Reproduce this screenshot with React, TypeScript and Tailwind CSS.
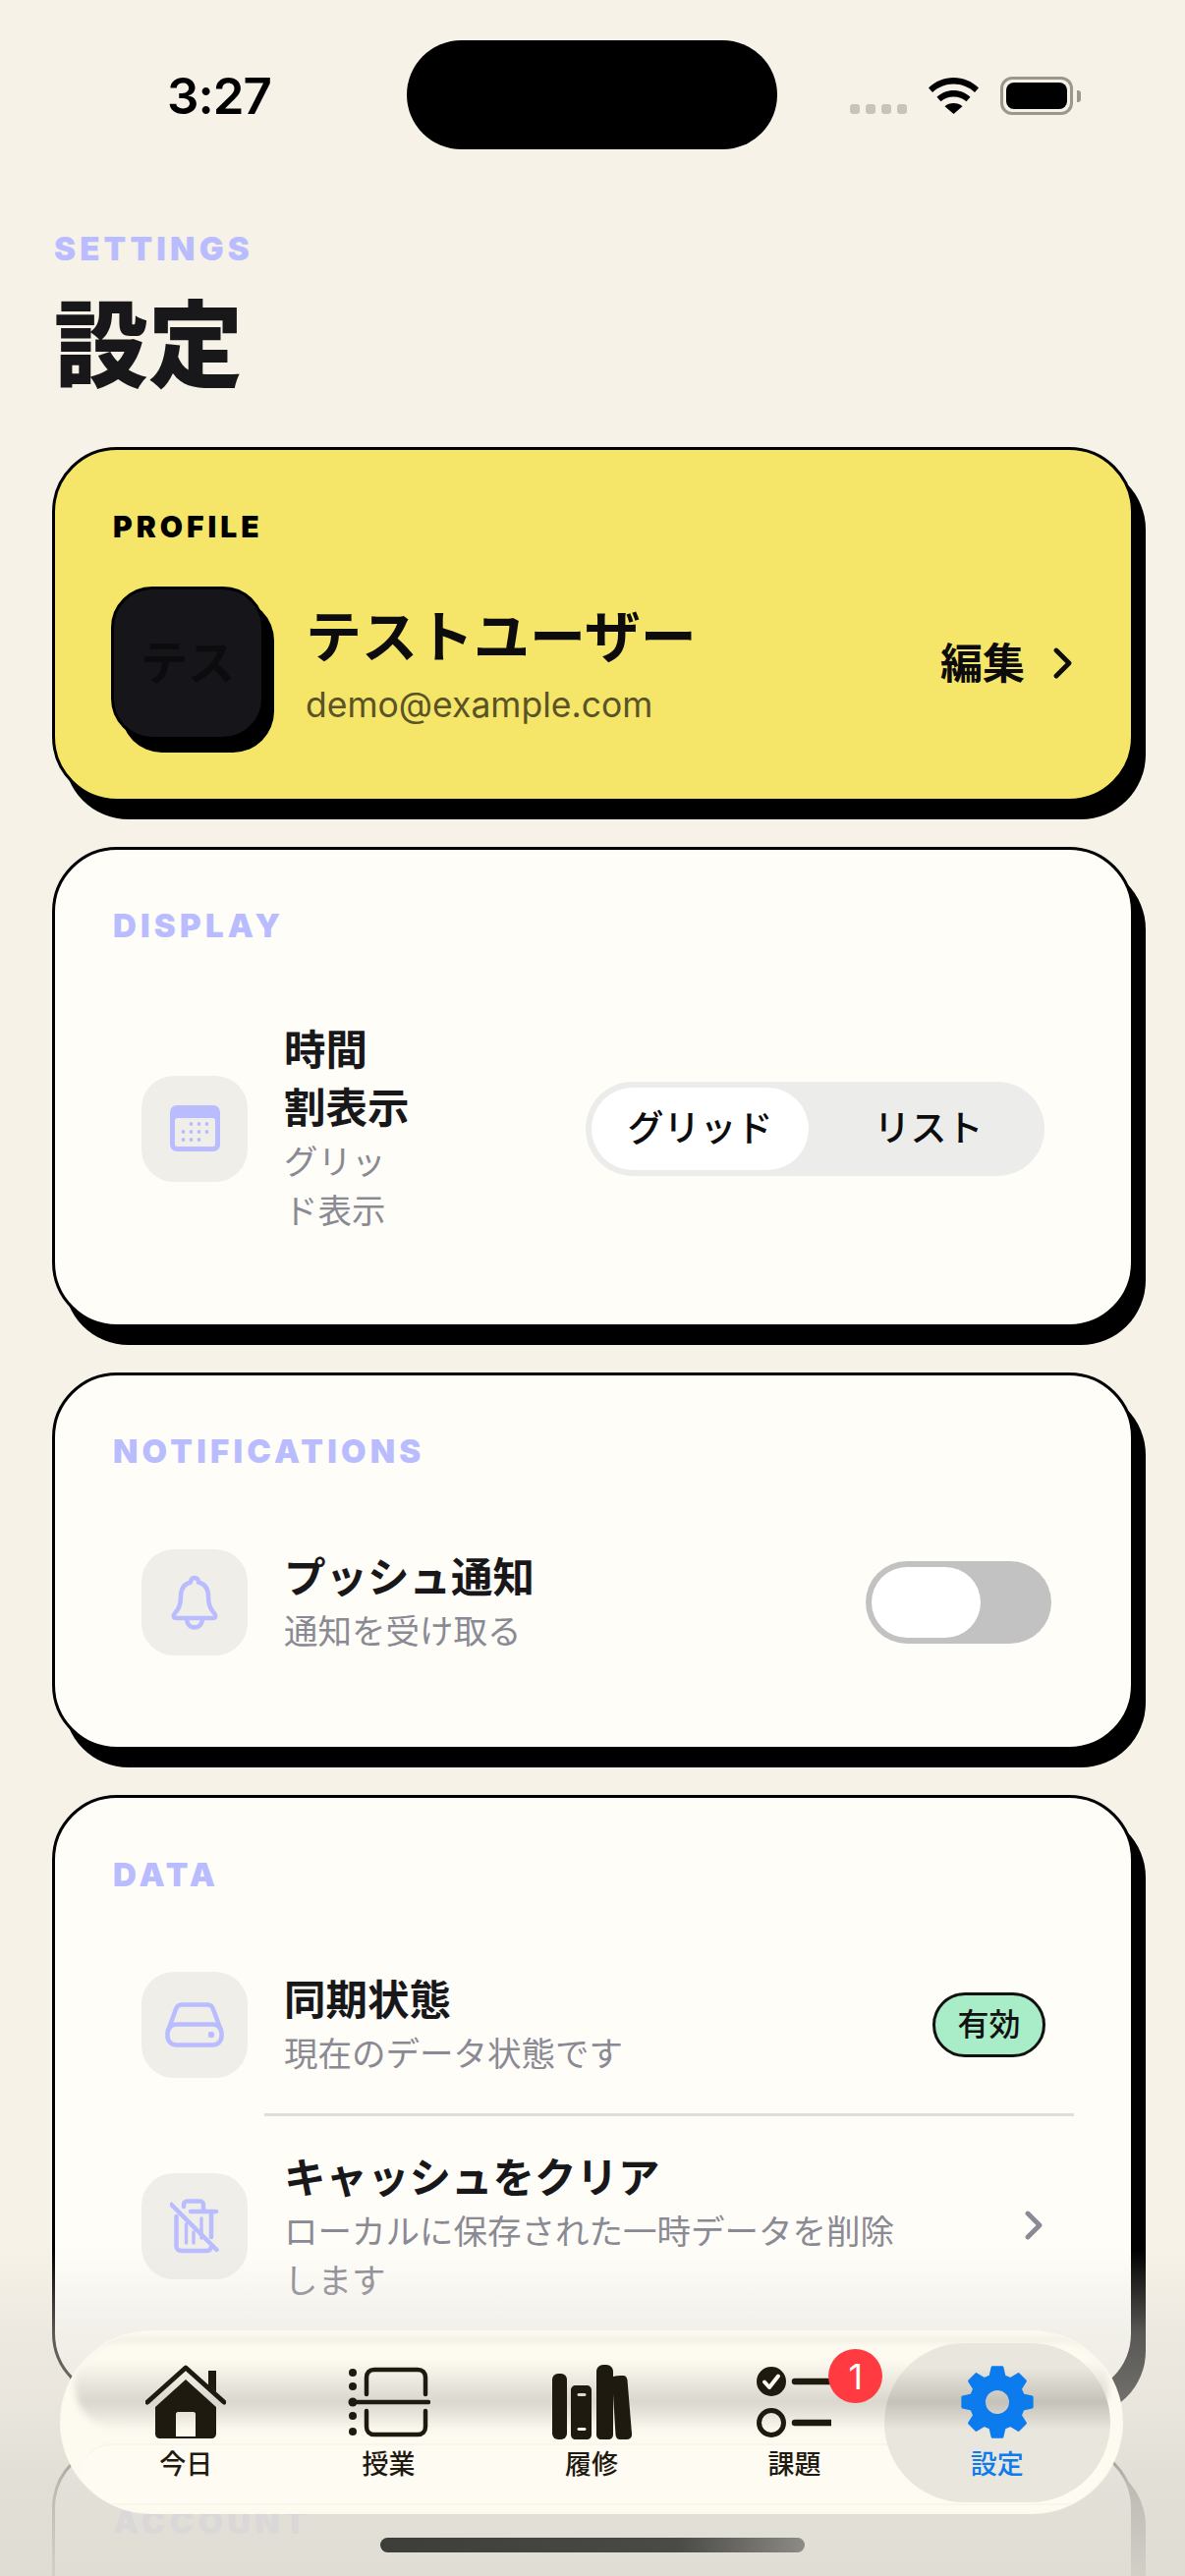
const cjk = "font-['Inter','Noto_Sans_CJK_JP',sans-serif]";

const Lavender = '#b9bcff';

function SectionLabel({ children, className }: { children: string; className?: string }) {
  return (
    <div className={`h-[25px] text-[33px] leading-[25px] font-black tracking-[4.2px] text-[#b9bcff] ${className ?? ''}`}>
      {children}
    </div>
  );
}

function Card({ children, className }: { children: React.ReactNode; className?: string }) {
  return (
    <section
      className={`ml-[53px] w-[1101px] rounded-[66px] border-[3px] border-black shadow-[12px_18px_0_0_#000] ${className ?? ''}`}
    >
      {children}
    </section>
  );
}

function IconTile({ children }: { children: React.ReactNode }) {
  return (
    <div className="flex h-[108px] w-[108px] shrink-0 items-center justify-center rounded-[33px] bg-[#f0eee8]">
      {children}
    </div>
  );
}

function CalendarIcon() {
  const rows = [[1, 2, 3], [0, 1, 2, 3], [0, 1, 2]];
  return (
    <svg width="51" height="47" viewBox="0 0 51 47" fill="none">
      <rect width="51" height="47" rx="7" fill={Lavender} />
      <rect x="5" y="13" width="41" height="29" rx="2.500" fill="#f0eee8" />
      {rows.map((cols, r) =>
        cols.map((c) => <circle key={`${r}${c}`} cx={13.500 + c * 8} cy={19 + r * 8} r="1.900" fill={Lavender} />),
      )}
    </svg>
  );
}

function BellIcon() {
  return (
    <svg width="52" height="56" viewBox="0 0 52 56" fill="none" stroke={Lavender} strokeWidth="4.500" strokeLinejoin="round">
      <path d="M26 3c-2.600 0-4 2-4 4.500-7.500 2-10 8-10 14.500 0 8-2 13-6 17-2.200 2.200-1.500 5 1.500 5h37c3 0 3.700-2.800 1.500-5-4-4-6-9-6-17 0-6.500-2.500-12.500-10-14.500C30 5 28.600 3 26 3Z" />
      <path d="M18 44c0 6 3.500 9.500 8 9.500s8-3.500 8-9.500" />
    </svg>
  );
}

function DriveIcon() {
  return (
    <svg width="60" height="46" viewBox="0 0 60 46" fill="none" stroke={Lavender} strokeWidth="4.500" strokeLinejoin="round">
      <path d="M3 29 11 7c1-3 3-4.500 6-4.500h26c3 0 5 1.500 6 4.500l8 22" />
      <rect x="2.500" y="22.500" width="55" height="21" rx="9" />
      <circle cx="47" cy="33" r="3.200" fill={Lavender} stroke="none" />
    </svg>
  );
}

function TrashSlashIcon() {
  return (
    <svg width="50" height="56" viewBox="0 0 50 56" fill="none" stroke={Lavender} strokeWidth="4.500" strokeLinecap="round" strokeLinejoin="round">
      <path d="M14 8V6c0-2 1.500-3.500 3.500-3.500h13c2 0 3.500 1.500 3.500 3.500v7" />
      <path d="M21 13h26" />
      <path d="M6.500 18v30c0 3 2 5 5 5h26c2 0 3.500-1 4-3" />
      <path d="M42 13v26" />
      <path d="M16.500 26v19M24 34v11M32 20v20" strokeWidth="3.400" />
      <path d="M1.500 6 47.500 52" />
    </svg>
  );
}

function Chevron({ className, color, w = 20, h = 30 }: { className?: string; color: string; w?: number; h?: number }) {
  return (
    <svg className={className} width={w} height={h} viewBox={`0 0 ${w} ${h}`} fill="none" stroke={color} strokeWidth="4.800" strokeLinecap="round" strokeLinejoin="round">
      <path d={`M4 3 ${w - 4} ${h / 2} 4 ${h - 3}`} />
    </svg>
  );
}

function HomeIcon() {
  return (
    <svg width="82" height="76" viewBox="0 0 82 76" fill="#1e1a10">
      <path d="M64 6h8v22l-8-7z" />
      <path d="M2 38 41 3l39 35" fill="none" stroke="#1e1a10" strokeWidth="5" strokeLinecap="round" strokeLinejoin="round" />
      <path fillRule="evenodd" d="M41 15 72 43v27c0 3-2 5-5 5H15c-3 0-5-2-5-5V43ZM33 48c-1 0-2 1-2 2v23h20V50c0-1-1-2-2-2Z" />
    </svg>
  );
}

function ClassesIcon() {
  return (
    <svg width="84" height="72" viewBox="0 0 84 72" fill="none" stroke="#1e1a10" strokeWidth="4.500" strokeLinecap="round">
      <g fill="#1e1a10" stroke="none">
        <circle cx="5" cy="6" r="4" />
        <circle cx="5" cy="20" r="4" />
        <circle cx="5" cy="36" r="4.500" />
        <circle cx="5" cy="50" r="4" />
        <circle cx="5" cy="66" r="4" />
      </g>
      <path d="M5 36h77" />
      <path d="M19 28V11c0-5 3-8 8-8h44c5 0 8 3 8 8v17" />
      <path d="M19 45v16c0 5 3 8 8 8h44c5 0 8-3 8-8V45" />
    </svg>
  );
}

function BooksIcon() {
  return (
    <svg width="81" height="76" viewBox="0 0 81 76" fill="#1e1a10">
      <rect x="0" y="9" width="15" height="67" rx="6" />
      <path fillRule="evenodd" d="M19 26c0-3 2-5 5-5h11c3 0 5 2 5 5v45c0 3-2 5-5 5H24c-3 0-5-2-5-5ZM27 29c-2 0-2 3 0 3h6c2 0 2-3 0-3ZM27 64c-2 0-2 3 0 3h6c2 0 2-3 0-3Z" />
      <path d="M45 7c0-4 3-7 7-7h3c4 0 7 3 7 7v64c0 3-2 5-5 5h-7c-3 0-5-2-5-5Z" />
      <path d="M62 12c3-1 8-1 10-1 3 0 4 2 4.500 4.500L81 70c.5 4-2 6-5 6h-7c-3 0-4-2-4.500-4.500L62 30Z" />
    </svg>
  );
}

function TasksIcon() {
  return (
    <svg width="76" height="76" viewBox="0 0 76 76" fill="none">
      <circle cx="15" cy="17" r="15" fill="#1e1a10" />
      <path d="M8 17.500l5 5.500 9-11.500" stroke="#fffbf0" strokeWidth="4" strokeLinecap="round" strokeLinejoin="round" />
      <circle cx="15" cy="59" r="12.500" stroke="#1e1a10" strokeWidth="5" />
      <path d="M39 17h36M39 59h36" stroke="#1e1a10" strokeWidth="6.500" strokeLinecap="round" />
    </svg>
  );
}

function GearIcon() {
  // eight teeth, corners rounded by the round-join stroke
  const pts: string[] = [];
  for (let i = 0; i < 8; i++) {
    const a = (i * 45 - 90) * (Math.PI / 180);
    for (const [r, d] of [[27, -15], [35.500, -8], [35.500, 8], [27, 15]]) {
      const t = a + (d * Math.PI) / 180;
      pts.push(`${(37 + r * Math.cos(t)).toFixed(2)} ${(37 + r * Math.sin(t)).toFixed(2)}`);
    }
  }
  const d = `M${pts.join('L')}Z M37 23.500a13.500 13.500 0 1 0 0 27 13.500 13.500 0 0 0 0-27Z`;
  return (
    <svg width="74" height="74" viewBox="0 0 74 74" fill="#0b7bee" stroke="#0b7bee" strokeWidth="3" strokeLinejoin="round">
      <path fillRule="evenodd" d={d} />
    </svg>
  );
}

function RowText({ title, sub }: { title: React.ReactNode; sub: React.ReactNode }) {
  return (
    <div className="min-w-0">
      <div className="text-[42.500px] leading-[59px] font-bold text-[#18181b]">{title}</div>
      <div className="pt-[1px] text-[34.500px] leading-[50px] text-[#8a8a94]">{sub}</div>
    </div>
  );
}

function Tab({ label, active, children }: { label: string; active?: boolean; children: React.ReactNode }) {
  return (
    <div className="relative flex w-[207.500px] flex-col items-center">
      <div className="flex h-[84px] items-center justify-center">{children}</div>
      <div className={`mt-[4px] text-[27px] leading-[36px] font-medium ${active ? 'text-[#0b7bee]' : 'text-[#1e1a10]'}`}>{label}</div>
    </div>
  );
}

export default function App() {
  return (
    <div className={`relative h-[2622px] w-[1206px] overflow-hidden bg-[#f6f2e8] ${cjk}`}>
      {/* status bar */}
      <div className="relative h-[241px]">
        <div className="absolute top-[68px] left-[170px] text-[51px] leading-[60px] font-semibold tracking-[-1px] text-black">3:27</div>
        <div className="absolute top-[41px] left-[414px] h-[111px] w-[377px] rounded-[56px] bg-black" />
        <div className="absolute top-[106px] left-[865px] flex gap-[6px]">
          <div className="h-[10px] w-[10px] rounded-[3px] bg-[#c7c4bc]" />
          <div className="h-[10px] w-[10px] rounded-[3px] bg-[#c7c4bc]" />
          <div className="h-[10px] w-[10px] rounded-[3px] bg-[#c7c4bc]" />
          <div className="h-[10px] w-[10px] rounded-[3px] bg-[#c7c4bc]" />
        </div>
        <svg className="absolute top-[79px] left-[945px]" width="51" height="37" viewBox="0 0 51 37" fill="black">
          <path d="M25.500 0C16 0 7 3.500 0 10.500l4 4.500c6-5.500 13.500-8.500 21.500-8.500S41 9.500 47 15l4-4.500C44 3.500 35 0 25.500 0Z" />
          <path d="M25.500 13C19 13 13 15.500 8.500 19.700l4 4.500c3.500-3 8-4.800 13-4.800s9.500 1.800 13 4.800l4-4.500C38 15.500 32 13 25.500 13Z" />
          <path d="M25.500 26c-3.500 0-6.500 1.200-9 3.200l9 7.800 9-7.800c-2.500-2-5.500-3.200-9-3.200Z" />
        </svg>
        <div className="absolute top-[78px] left-[1018px] h-[39px] w-[74px] rounded-[12px] border-[3px] border-[#9c978c] p-[3px]">
          <div className="h-full w-full rounded-[8px] bg-black" />
        </div>
        <div className="absolute top-[92px] left-[1096px] h-[12px] w-[4px] rounded-r-[3px] bg-[#9c978c]" />
      </div>

      {/* heading */}
      <div className="px-[55px]">
        <SectionLabel>SETTINGS</SectionLabel>
        <h1 className="mt-[29px] text-[96px] leading-[112px] font-black text-[#18181b]">設定</h1>
      </div>

      <div className="mt-[48px] flex flex-col gap-[46px]">
        {/* profile */}
        <Card className="h-[361px] bg-[#f5e568] px-[59px] pt-[66px]">
          <div className="h-[25px] text-[30px] leading-[25px] font-black tracking-[4px] text-black">PROFILE</div>
          <div className="mt-[48px] flex items-center">
            <div className="-ml-[2px] flex h-[156px] w-[156px] shrink-0 items-center justify-center rounded-[42px] border-[3px] border-black bg-[#16161a] text-[48px] font-bold text-[#0c0c0e] shadow-[10px_13px_0_0_#000]">
              テス
            </div>
            <div className="ml-[42px] min-w-0 pt-[6px]">
              <div className="text-[57px] leading-[70px] font-bold text-[#0c0c0e]">テストユーザー</div>
              <div className="mt-[9px] text-[35.500px] leading-[50px] text-[#5a5327]">demo@example.com</div>
            </div>
            <div className="ml-auto flex items-center gap-[28px] text-[43px] font-bold text-[#0c0c0e]">
              編集
              <Chevron color="#0c0c0e" w={21} h={32} />
            </div>
          </div>
        </Card>

        {/* display */}
        <Card className="h-[489px] bg-[#fffdf8] px-[59px] pt-[65px]">
          <SectionLabel>DISPLAY</SectionLabel>
          <div className="mt-[84px] flex items-center pr-[29px] pl-[29px]">
            <IconTile>
              <CalendarIcon />
            </IconTile>
            <div className="ml-[37px] w-[150px]">
              <RowText title={<>時間<br />割表示</>} sub={<>グリッ<br />ド表示</>} />
            </div>
            <div className="ml-auto flex h-[96px] w-[467px] items-center rounded-[48px] bg-[#ececea] pl-[6px]">
              <div className="flex h-[84px] w-[221px] items-center justify-center rounded-[42px] bg-white text-[37px] font-medium text-[#0c0c0e]">グリッド</div>
              <div className="flex h-[84px] flex-1 items-center justify-center pl-[4px] text-[37px] font-medium text-[#0c0c0e]">リスト</div>
            </div>
          </div>
        </Card>

        {/* notifications */}
        <Card className="h-[384px] bg-[#fffdf8] px-[59px] pt-[65px]">
          <SectionLabel>NOTIFICATIONS</SectionLabel>
          <div className="mt-[86px] flex items-center pr-[22px] pl-[29px]">
            <IconTile>
              <BellIcon />
            </IconTile>
            <div className="ml-[37px]">
              <RowText title="プッシュ通知" sub="通知を受け取る" />
            </div>
            <div className="ml-auto h-[84px] w-[189px] rounded-[42px] bg-[#c3c2c2] p-[6px]">
              <div className="h-[72px] w-[111px] rounded-[36px] bg-white" />
            </div>
          </div>
        </Card>

        {/* data */}
        <Card className="h-[614px] bg-[#fffdf8] px-[59px] pt-[66px]">
          <SectionLabel>DATA</SectionLabel>
          <div className="mt-[85px] flex items-center pr-[28px] pl-[29px]">
            <IconTile>
              <DriveIcon />
            </IconTile>
            <div className="ml-[37px]">
              <RowText title="同期状態" sub="現在のデータ状態です" />
            </div>
            <div className="ml-auto flex h-[66px] w-[115px] items-center justify-center rounded-[33px] border-[3px] border-[#111] bg-[#a8ecc8] text-[32px] font-medium text-[#111]">有効</div>
          </div>
          <div className="mt-[35px] ml-[154px] h-[3px] w-[824px] bg-[#dfdfda]" />
          <div className="mt-[33px] flex items-start pr-[30px] pl-[29px]">
            <div className="mt-[25px]">
              <IconTile>
                <TrashSlashIcon />
              </IconTile>
            </div>
            <div className="ml-[37px]">
              <RowText title="キャッシュをクリア" sub={<>ローカルに保存された一時データを削除<br />します</>} />
            </div>
            <Chevron className="mt-[63px] ml-auto" color="#8a8a94" />
          </div>
        </Card>

        {/* account */}
        <Card className="h-[400px] bg-[#fffdf8] px-[59px] pt-[65px]">
          <SectionLabel>ACCOUNT</SectionLabel>
        </Card>
      </div>

      {/* fade under the tab bar */}
      <div className="pointer-events-none absolute inset-x-0 bottom-0 h-[332px] bg-[linear-gradient(to_bottom,#dedbd300_0px,#dedbd366_85px,#dedbd380_150px,#dedbd3d9_240px,#dedbd3f2_332px)]" />

      {/* tab bar */}
      <nav className="absolute top-[2373px] left-[62px] h-[185px] w-[1080px] overflow-hidden rounded-[92px] bg-[#fdfaf0] shadow-[0_0_0_1px_#fbf8ee]">
        <div className="absolute inset-x-[14px] top-[7px] h-[94px] rounded-[70px] border-t-[3px] border-[#e6e3da] bg-[linear-gradient(to_bottom,#fdfaf0_20px,#d9d6ce_62px,#fdfaf0_92px)] blur-[3px]" />
        <div className="absolute inset-x-[20px] top-[114px] bottom-[8px] rounded-[60px] border-t-[2px] border-b-[2px] border-[#f8f5ea] bg-[#fefbf2]" />
        <div className="absolute top-[12px] left-[838px] h-[162px] w-[230px] rounded-[81px] bg-[linear-gradient(to_bottom,#e9e6dd_25px,#c5c2b9_60px,#e9e6dd_88px)]" />
        <div className="absolute inset-x-[24px] top-[30px] flex">
          <Tab label="今日"><HomeIcon /></Tab>
          <Tab label="授業"><ClassesIcon /></Tab>
          <Tab label="履修"><BooksIcon /></Tab>
          <Tab label="課題">
            <TasksIcon />
            <div className="absolute top-[-12px] left-[138px] flex h-[55px] w-[55px] items-center justify-center rounded-full bg-[#ff3b41] text-[36px] text-white">1</div>
          </Tab>
          <Tab label="設定" active><GearIcon /></Tab>
        </div>
      </nav>

      {/* home indicator */}
      <div className="absolute top-[2583px] left-[387px] h-[15px] w-[432px] rounded-full bg-gradient-to-r from-[#3d3d3a] via-[#4a4a47] via-70% to-[#8d8b85]" />
    </div>
  );
}
